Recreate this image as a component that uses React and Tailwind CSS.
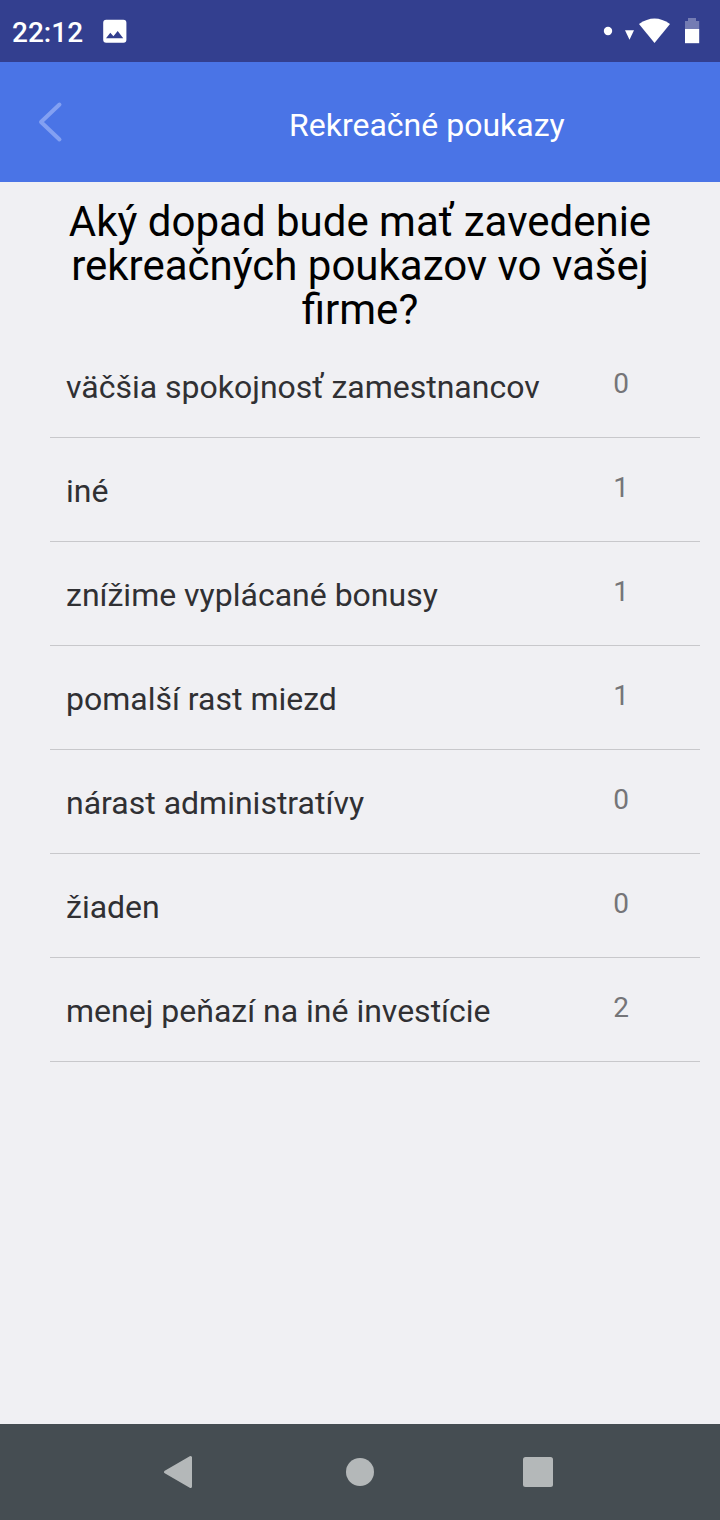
const answers = [
  { label: 'väčšia spokojnosť zamestnancov', votes: 0 },
  { label: 'iné', votes: 1 },
  { label: 'znížime vyplácané bonusy', votes: 1 },
  { label: 'pomalší rast miezd', votes: 1 },
  { label: 'nárast administratívy', votes: 0 },
  { label: 'žiaden', votes: 0 },
  { label: 'menej peňazí na iné investície', votes: 2 },
]

const StatusBar = () => (
  <div className="flex h-[62px] items-center bg-[#333f8f] pl-3 pr-5 text-white">
    <span className="pt-[3px] text-[28px] leading-8 font-medium">22:12</span>
    <svg className="ml-5 h-6 w-6" viewBox="0 0 24 24" fill="currentColor">
      <path
        fillRule="evenodd"
        d="M3.2 0.7h17.2a3 3 0 0 1 3 3v17a3 3 0 0 1-3 3H3.2a3 3 0 0 1-3-3v-17a3 3 0 0 1 3-3zM3 19.2h17.2l-5.5-7.2-4.3 5.3-3.1-3.5z"
      />
    </svg>
    <div className="ml-auto flex h-full items-center">
      <svg className="h-[62px] w-[100px]" viewBox="600 0 100 62" fill="currentColor">
        <circle cx="608" cy="31" r="4.2" />
        <path d="M625 30.2h9l-4.5 9.5z" />
        <path d="M639 24q15.500-11 31 0l-15.500 19z" />
        <path d="M688 18h8v3h3.200v8H685v-8h3z" opacity="0.32" />
        <path d="M685 29h14.200v14.200H685z" />
      </svg>
    </div>
  </div>
)

const Header = () => (
  <header className="flex h-[120px] items-center bg-[#4a74e6] pl-[37px] text-white">
    <button className="text-[#83a0f2]" aria-label="Späť">
      <svg className="h-[42px] w-[26px]" viewBox="0 0 26 42" fill="none" stroke="currentColor" strokeWidth="4" strokeLinecap="round" strokeLinejoin="round">
        <path d="M22.500 3.500L4 21l18.500 17.500" />
      </svg>
    </button>
    <h1 className="ml-[226px] pt-[6px] text-[32px] leading-[38px]">Rekreačné poukazy</h1>
  </header>
)

const NavBar = () => (
  <nav className="flex h-24 items-center justify-center bg-[#454d52] text-[#b4b8b9]">
    <svg className="h-24 w-[400px]" viewBox="160 0 400 96" fill="currentColor">
      <path d="M165.500 48L190.500 33.500v29z" stroke="currentColor" strokeWidth="3" strokeLinejoin="round" />
      <circle cx="360" cy="48" r="14" />
      <rect x="523" y="33" width="30" height="30" rx="2.500" />
    </svg>
  </nav>
)

const App = () => {
  return (
    <div className="flex h-[1520px] w-[720px] flex-col bg-[#f0f0f3] font-['Roboto',sans-serif]">
      <StatusBar />
      <Header />

      <main className="flex-1 pl-[50px] pr-5">
        <h2 className="mr-[30px] pt-[18px] text-center text-[42px] leading-[44px] text-black">
          Aký dopad bude mať zavedenie
          <br />
          rekreačných poukazov vo vašej
          <br />
          firme?
        </h2>

        <ul className="mt-[2px]">
          {answers.map((answer) => (
            <li key={answer.label} className="flex h-[104px] border-b border-[#c8c8cb] pl-4 pt-[34px]">
              <span className="flex-1 text-[32px] leading-[38px] text-[#303033]">{answer.label}</span>
              <span className="mr-[71px] text-[28px] leading-8 text-[#757578]">{answer.votes}</span>
            </li>
          ))}
        </ul>
      </main>

      <NavBar />
    </div>
  )
}

export default App
